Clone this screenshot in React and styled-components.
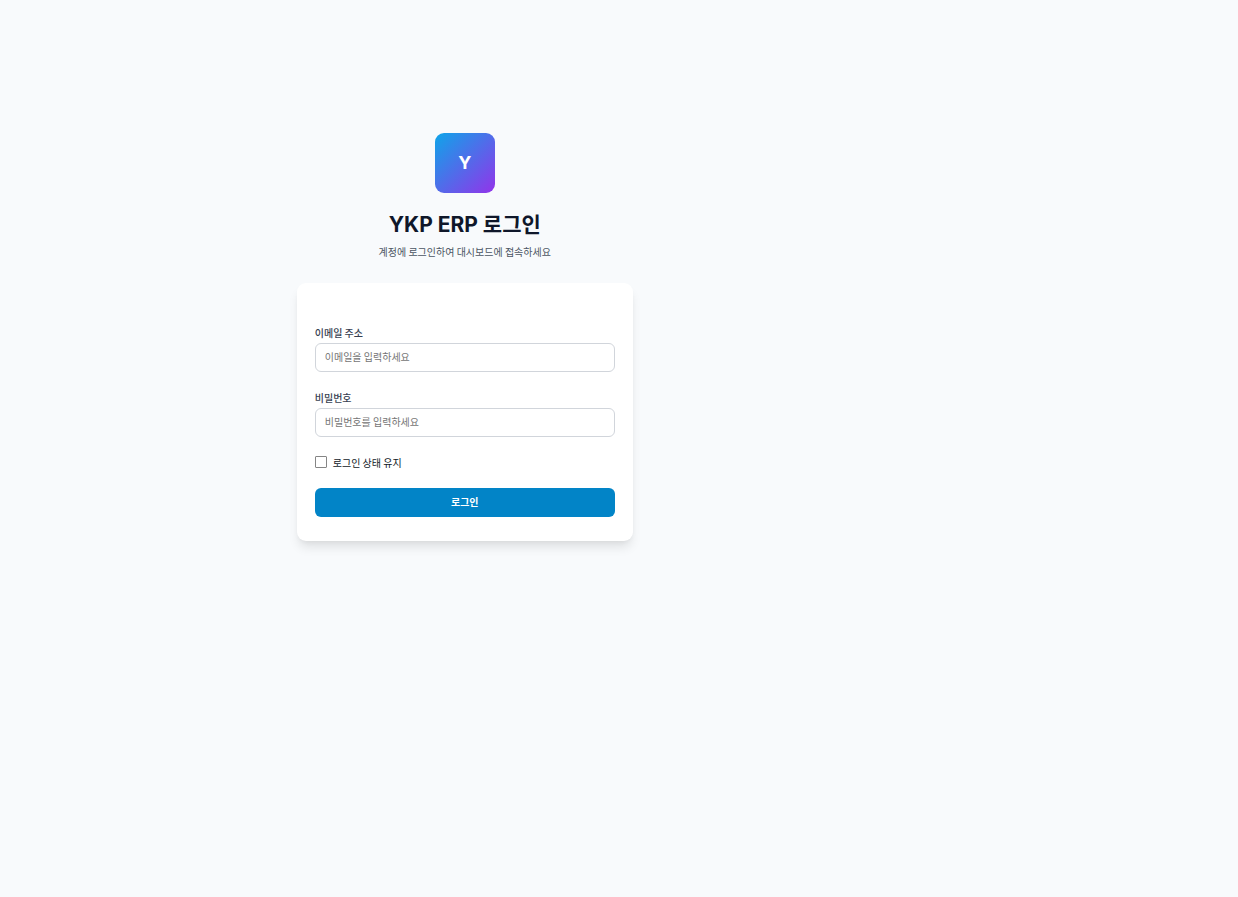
import React from "react";
import styled, { createGlobalStyle } from "styled-components";

const GlobalStyle = createGlobalStyle`
  *, *::before, *::after { box-sizing: border-box; }
  body {
    margin: 0;
    background: #f8fafc;
    color: #0f172a;
    font-family: "Noto Sans CJK KR", sans-serif;
    font-size: 10px;
    line-height: 15px;
  }
`;

const Page = styled.div`
  display: grid;
  grid-template-columns: 3fr 1fr;
`;

const Main = styled.main`
  min-height: 75vh;
  display: flex;
  align-items: center;
  justify-content: center;
  padding: 37px 12px 36px 13px;
`;

const Panel = styled.div`
  width: 100%;
  max-width: 336px;
`;

const Header = styled.header`
  display: flex;
  flex-direction: column;
  align-items: center;
  margin-bottom: 24px;
  text-align: center;
`;

const Logo = styled.div`
  display: flex;
  align-items: center;
  justify-content: center;
  width: 60px;
  height: 60px;
  margin-bottom: 18px;
  border-radius: 9px;
  background: linear-gradient(135deg, #0ea5e9, #9333ea);
  color: #fff;
  font-family: Inter, sans-serif;
  font-size: 18px;
  font-weight: 700;
`;

const Title = styled.h1`
  margin: 0 0 6px;
  font-family: Inter, "Noto Sans CJK KR", sans-serif;
  font-size: 21px;
  line-height: 27px;
  font-weight: 700;
`;

const Subtitle = styled.p`
  margin: 0;
  color: #4b5563;
`;

const Card = styled.form`
  display: flex;
  flex-direction: column;
  gap: 18px;
  padding: 42px 18px 24px;
  border-radius: 9px;
  background: #fff;
  box-shadow: 0 8px 11px -2px rgba(0, 0, 0, 0.1), 0 3px 5px -2px rgba(0, 0, 0, 0.05);
`;

const Field = styled.div`
  display: flex;
  flex-direction: column;
  gap: 3px;
`;

const Label = styled.label`
  color: #374151;
  font-weight: 500;
`;

const Input = styled.input`
  width: 100%;
  height: 29px;
  padding: 0 9px 1px;
  border: 1px solid #d1d5db;
  border-radius: 6px;
  background: #fff;
  color: #111827;
  font: inherit;
  &::placeholder { color: #757575; }
  &:focus { outline: 2px solid #0ea5e9; }
`;

const Remember = styled.label`
  display: flex;
  align-items: center;
  gap: 6px;
  color: #111827;
`;

const Checkbox = styled.input`
  appearance: none;
  width: 12px;
  height: 12px;
  margin: 0;
  border: 1px solid #858585;
  border-radius: 1px;
  background: #fff;
  &:checked { background: #0284c7; }
`;

const Submit = styled.button`
  height: 29px;
  padding: 0 12px 1px;
  border: 0;
  border-radius: 6px;
  background: #0284c7;
  color: #fff;
  font: inherit;
  font-weight: 600;
  cursor: pointer;
`;

export default function App() {
  return (
    <Page>
      <GlobalStyle />
      <Main>
        <Panel>
          <Header>
            <Logo>Y</Logo>
            <Title>YKP ERP 로그인</Title>
            <Subtitle>계정에 로그인하여 대시보드에 접속하세요</Subtitle>
          </Header>
          <Card onSubmit={(event) => event.preventDefault()}>
            <Field>
              <Label htmlFor="email">이메일 주소</Label>
              <Input id="email" type="email" placeholder="이메일을 입력하세요" />
            </Field>
            <Field>
              <Label htmlFor="password">비밀번호</Label>
              <Input id="password" type="password" placeholder="비밀번호를 입력하세요" />
            </Field>
            <Remember htmlFor="remember">
              <Checkbox id="remember" type="checkbox" />
              로그인 상태 유지
            </Remember>
            <Submit type="submit">로그인</Submit>
          </Card>
        </Panel>
      </Main>
    </Page>
  );
}
